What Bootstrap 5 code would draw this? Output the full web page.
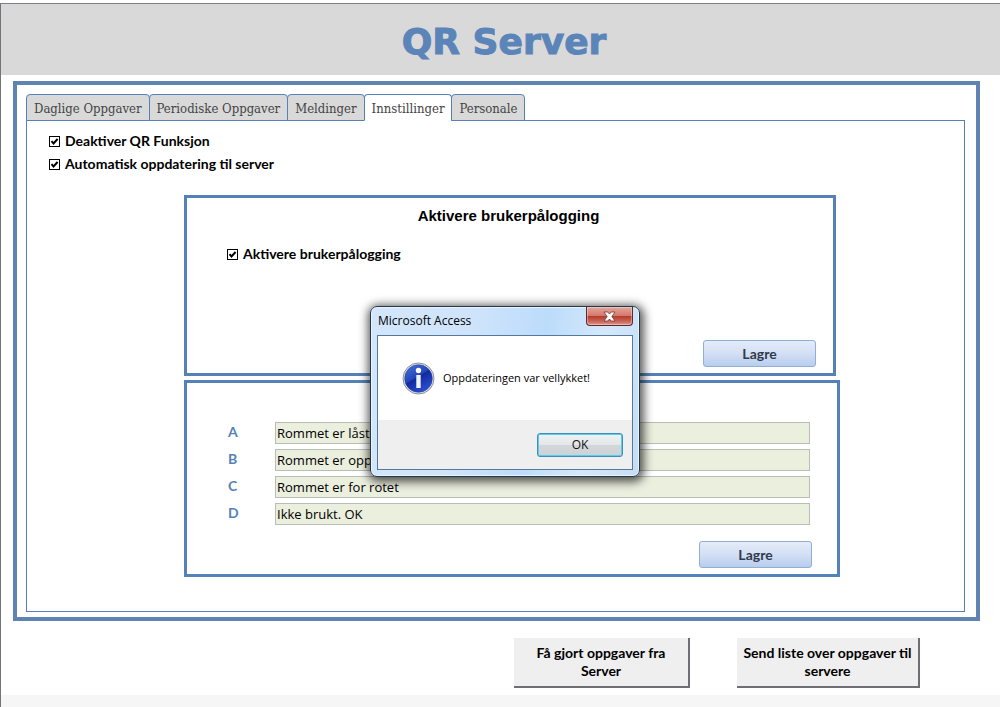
<!DOCTYPE html>
<html lang="no">
<head>
<meta charset="utf-8">
<meta name="viewport" content="width=device-width, initial-scale=1">
<title>QR Server</title>
<link href="https://cdn.jsdelivr.net/npm/bootstrap@5.3.0/dist/css/bootstrap.min.css" rel="stylesheet">
<style>
:root { --line: #5482b8; --frame: #5f84b1; }
body { font: 700 14px/18px Lato, "Liberation Sans", sans-serif; color: #000; background: #fff; }
.app-window { margin-top: 3px; min-height: calc(100vh - 3px); border-top: 1px solid #7d7f83; border-left: 1px solid #70757a; }
.app-header { background: #d9d9d9; height: 71px; padding: 4px 0 0 7px; }
.app-header h1 { font: 700 36px/40px "DejaVu Sans", sans-serif; color: #5b84b9; -webkit-text-stroke: 1px #5b84b9; margin-bottom: 0; }
.form-frame { border: 4px solid var(--frame); margin: 6px 20px 0 12px; padding: 9px 11px 5px 9px; }
.app-tabs { --bs-nav-tabs-border-width: 0; gap: 0; }
.app-tabs .nav-link { font: 400 13px/23px "DejaVu Serif Condensed", "DejaVu Serif", serif; color: #444; background: #d9d9d9; border: 1px solid var(--line); border-radius: 4px 4px 0 0; padding: 2px 7px 0; margin: 0 -1px 0 0; white-space: nowrap; }
.app-tabs .nav-link.active { background: #fff; color: #444; border-color: var(--line) var(--line) #fff; }
.app-pane { border: 1px solid var(--line); margin-top: -1px; padding: 11px 124px 34px 22px; }
.check-row { gap: 5px; height: 23px; padding-bottom: 5px; }
.check-row .form-check-input { width: 11px; height: 11px; margin: 0; border: 1px solid #000; border-radius: 0; background-color: #fff; }
.check-row .form-check-input:checked { background-size: 9px 9px; background-image: url("data:image/svg+xml,%3csvg xmlns='http://www.w3.org/2000/svg' viewBox='0 0 9 9'%3e%3cpath d='M1.5 4.2 3.5 6.4 7.6 2' fill='none' stroke='%23000' stroke-width='2'/%3e%3c/svg%3e"); }
.panels { margin: 17px 0 0 135px; }
.panel-box { border: 3px solid var(--line); }
.panel-login { height: 181px; padding: 9px 17px 6px 40px; }
.panel-login h2 { font: 700 15px/18px "Liberation Sans", sans-serif; padding-right: 26px; }
.panel-login .check-row { margin-top: 20px; }
.panel-answers { height: 197px; padding: 39px 25px 6px 41px; }
.answers { gap: 5px; padding-right: 2px; }
.answer-row { gap: 5px; }
.answer-row label { width: 42px; flex: none; color: var(--line); line-height: 20px; }
.answer-row .form-control { height: 22px; padding: 0 1px; border: 1px solid #b9bdb6; border-radius: 0; background: #ebefde; color: #000; font: 400 13px/20px "Open Sans", sans-serif; }
.btn-save { width: 113px; height: 27px; padding: 0; font: 700 14px/25px Lato, sans-serif; color: #2f3b4d; border: 1px solid #93aed3; border-radius: 3px; background: linear-gradient(#e4ecf9, #d3dff4 50%, #b8cdee); }
.btn-raised { width: 176px; height: 50px; padding: 0 2px; border: solid #6d6f74; border-width: 0 2px 2px 0; border-radius: 0; background: #efefef; font: 700 14px/18px Lato, sans-serif; color: #000; }
.btn-raised-wide { width: 183px; }
.actions { gap: 47px; margin: 17px 80px 7px 0; }
.app-footer { height: 12px; background: #f6f6f6; }
.msg-window { left: 37%; top: 306px; width: 270px; border: 1px solid #24384b; border-radius: 7px; padding: 0 6px 6px; font: 400 12px/16px "Open Sans", sans-serif;
  background: linear-gradient(100deg, #d3e6fb 0, #cfe4fb 35%, #bcdcfb 60%, #d5e8fb 80%, #c5ddf3); box-shadow: inset 0 0 0 1px #e9f4fd, 1px 2px 10px 3px rgba(0,0,0,.65); }
.msg-title { height: 28px; padding: 6px 0 0 1px; }
.btn-x { width: 47px; height: 19px; border: 1px solid #5a2a2c; border-top: 0; border-radius: 0 0 4px 4px; padding: 0; margin-top: -6px; background: linear-gradient(#e5a79b, #d3786c 48%, #b83a2a 52%, #c8675a 80%, #e0988a); box-shadow: inset 0 0 0 1px rgba(255,255,255,.35); }
.msg-client { border: 1px solid #55789b; background: #fff; }
.msg-body { height: 84px; gap: 8px; padding-left: 24px; font-size: 11px; }
.msg-actions { height: 49px; background: #efefef; padding-right: 9px; }
.btn-ok { width: 86px; height: 24px; padding: 0; border: 1px solid #3c8fb5; border-radius: 3px; font: 400 12px/20px "Open Sans", sans-serif; color: #111; background: linear-gradient(#f0f2f3, #e4e7e9 48%, #d3d7da 52%, #cdd2d6); box-shadow: inset 0 0 0 1px #58cdee; }
</style>
</head>
<body>
<div class="app-window d-flex flex-column">
  <header class="app-header d-flex align-items-center justify-content-center"><h1>QR Server</h1></header>
  <main class="form-frame">
    <ul class="nav nav-tabs app-tabs flex-nowrap">
      <li class="nav-item"><a class="nav-link" href="#">Daglige Oppgaver</a></li>
      <li class="nav-item"><a class="nav-link" href="#">Periodiske Oppgaver</a></li>
      <li class="nav-item"><a class="nav-link" href="#">Meldinger</a></li>
      <li class="nav-item"><a class="nav-link active" aria-current="page" href="#">Innstillinger</a></li>
      <li class="nav-item"><a class="nav-link" href="#">Personale</a></li>
    </ul>
    <div class="app-pane">
      <div class="check-row d-flex align-items-center"><input class="form-check-input" type="checkbox" id="qr" checked><label for="qr">Deaktiver QR Funksjon</label></div>
      <div class="check-row d-flex align-items-center"><input class="form-check-input" type="checkbox" id="auto" checked><label for="auto">Automatisk oppdatering til server</label></div>
      <div class="panels d-flex flex-column gap-1">
        <section class="panel-box panel-login d-flex flex-column me-1">
          <h2 class="text-center mb-0">Aktivere brukerpålogging</h2>
          <div class="check-row d-flex align-items-center"><input class="form-check-input" type="checkbox" id="login" checked><label for="login">Aktivere brukerpålogging</label></div>
          <button type="button" class="btn btn-save mt-auto ms-auto">Lagre</button>
        </section>
        <section class="panel-box panel-answers d-flex flex-column">
          <div class="d-flex flex-column answers">
            <div class="answer-row d-flex"><label for="a">A</label><input class="form-control" id="a" value="Rommet er låst"></div>
            <div class="answer-row d-flex"><label for="b">B</label><input class="form-control" id="b" value="Rommet er opp"></div>
            <div class="answer-row d-flex"><label for="c">C</label><input class="form-control" id="c" value="Rommet er for rotet"></div>
            <div class="answer-row d-flex"><label for="d">D</label><input class="form-control" id="d" value="Ikke brukt. OK"></div>
          </div>
          <button type="button" class="btn btn-save mt-auto ms-auto">Lagre</button>
        </section>
      </div>
    </div>
  </main>
  <div class="actions d-flex justify-content-end">
    <button type="button" class="btn btn-raised">Få gjort oppgaver fra<br>Server</button>
    <button type="button" class="btn btn-raised btn-raised-wide">Send liste over oppgaver til<br>servere</button>
  </div>
  <footer class="app-footer mt-auto"></footer>
</div>

<div class="msg-window position-absolute" role="dialog" aria-labelledby="msg-title">
  <div class="msg-title d-flex justify-content-between">
    <span id="msg-title">Microsoft Access</span>
    <button type="button" class="btn btn-x d-flex align-items-center justify-content-center" aria-label="Lukk">
      <svg width="13" height="11" viewBox="0 0 13 11"><path d="M1 1h3.700l1.800 2L8.300 1H12L8.900 5.500 12 10H8.300L6.500 8 4.700 10H1l3.100-4.500z" fill="#fff" stroke="#6b3a3c" stroke-width=".8"/></svg>
    </button>
  </div>
  <div class="msg-client">
    <div class="msg-body d-flex align-items-center">
      <svg width="33" height="33" viewBox="0 0 33 33" aria-hidden="true">
        <defs><linearGradient id="g" x1="0" y1="0" x2="0.6" y2="1"><stop offset="0" stop-color="#4a74dc"/><stop offset=".5" stop-color="#2447b9"/><stop offset=".55" stop-color="#1029a0"/><stop offset="1" stop-color="#2b4fd0"/></linearGradient></defs>
        <circle cx="16.500" cy="16.500" r="15.500" fill="#e4e7ee" stroke="#858b99"/>
        <circle cx="16.500" cy="16.500" r="13.800" fill="url(#g)" stroke="#203c91" stroke-width=".6"/>
        <circle cx="16.500" cy="8.500" r="2.700" fill="#fff"/><path d="M14.300 13h4.400v13h-4.400z" fill="#f1f2f5"/>
      </svg>
      <span>Oppdateringen var vellykket!</span>
    </div>
    <div class="msg-actions d-flex align-items-center justify-content-end"><button type="button" class="btn btn-ok">OK</button></div>
  </div>
</div>
<script src="https://cdn.jsdelivr.net/npm/bootstrap@5.3.0/dist/js/bootstrap.bundle.min.js"></script>
</body>
</html>
